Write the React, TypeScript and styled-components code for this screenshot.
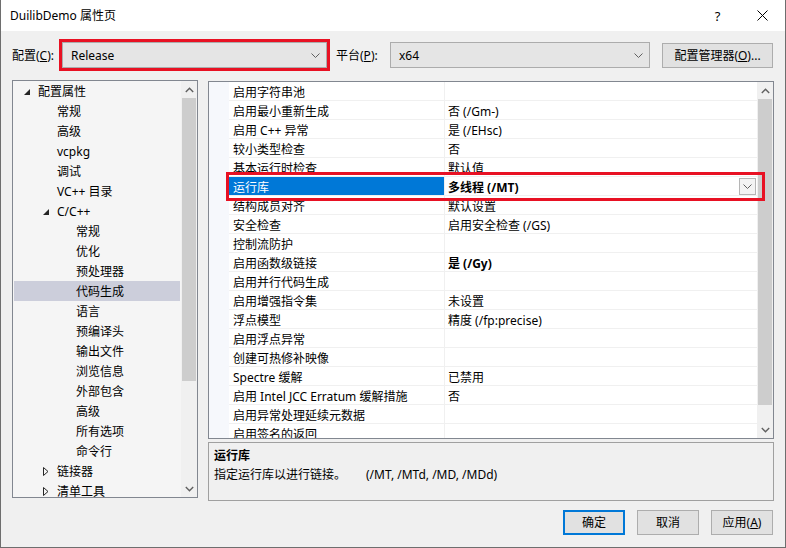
import styled, { createGlobalStyle } from "styled-components";

const GlobalStyle = createGlobalStyle`
  html, body {
    margin: 0;
    padding: 0;
    background: #ffffff;
  }
  body {
    font-family: "Noto Sans", "Noto Sans CJK SC", sans-serif;
    font-size: 12px;
    color: #000;
  }
  * {
    box-sizing: border-box;
  }
`;

const Window = styled.div`
  width: 786px;
  height: 548px;
  display: flex;
  flex-direction: column;
  border: 1px solid #6e6e6e;
  border-top: none;
  background: #f0f0f0;
  overflow: hidden;
`;

const TitleBar = styled.div`
  height: 31px;
  flex: none;
  display: flex;
  align-items: center;
  background: #ffffff;
  padding-left: 9px;
  line-height: 16px;
`;

const Title = styled.div`
  flex: 1;
`;

const TitleButton = styled.div`
  width: 45px;
  height: 31px;
  display: flex;
  align-items: center;
  justify-content: center;
  font-size: 13px;
`;

const Body = styled.div`
  flex: 1;
  display: flex;
  flex-direction: column;
  padding: 11px 11px 0 11px;
`;

const ConfigRow = styled.div`
  display: flex;
  align-items: center;
  height: 26px;
`;

const FieldLabel = styled.label<{ $w: number; $ml?: number }>`
  width: ${(p) => p.$w}px;
  margin-left: ${(p) => p.$ml ?? 0}px;
  flex: none;
  padding-top: 2px;
  line-height: 16px;
`;

const Combo = styled.div<{ $w: number; $marked?: boolean }>`
  width: ${(p) => p.$w}px;
  height: 26px;
  flex: none;
  display: flex;
  align-items: center;
  justify-content: space-between;
  padding: 1px 6px 0 8px;
  background: #e5e5e5;
  border: 1px solid #acacac;
  line-height: 16px;
  outline: ${(p) => (p.$marked ? "3px solid #e81123" : "none")};
`;

const PushButton = styled.button<{ $w: number; $ml?: number; $default?: boolean }>`
  width: ${(p) => p.$w}px;
  margin-left: ${(p) => p.$ml ?? 0}px;
  height: 25px;
  flex: none;
  padding: 1px 0 0;
  font: inherit;
  line-height: 16px;
  color: #000;
  background: #e1e1e1;
  border: ${(p) => (p.$default ? "2px solid #0078d7" : "1px solid #adadad")};
`;

const Main = styled.div`
  display: flex;
  gap: 10px;
  margin-top: 12px;
  height: 421px;
`;

const TreePanel = styled.div`
  width: 186px;
  height: 418px;
  flex: none;
  display: flex;
  border: 1px solid #828790;
  background: #f5f5f5;
  overflow: hidden;
`;

const TreeList = styled.div`
  flex: 1;
  padding: 0 1px;
  overflow: hidden;
`;

const TreeRow = styled.div<{ $level: number; $selected?: boolean }>`
  height: 20px;
  display: flex;
  align-items: center;
  padding-top: 2px;
  padding-left: ${(p) => 7 + p.$level * 19}px;
  background: ${(p) => (p.$selected ? "#cccedb" : "transparent")};
  line-height: 16px;
  white-space: nowrap;
`;

const Twisty = styled.span`
  width: 17px;
  flex: none;
  display: flex;
  align-items: center;
  padding-left: 3px;
  margin-top: -1px;
`;

const ScrollBar = styled.div`
  width: 16px;
  flex: none;
  display: flex;
  flex-direction: column;
  background: #f0f0f0;
`;

const ScrollArrow = styled.div`
  height: 17px;
  flex: none;
  display: flex;
  align-items: center;
  justify-content: center;
`;

const ScrollThumb = styled.div<{ $h: number }>`
  height: ${(p) => p.$h}px;
  flex: none;
  margin: 0 1px;
  background: #cdcdcd;
`;

const ScrollTrack = styled.div`
  flex: 1;
`;

const RightColumn = styled.div`
  width: 566px;
  flex: none;
  display: flex;
  flex-direction: column;
`;

const GridPanel = styled.div`
  margin-top: 1px;
  height: 358px;
  flex: none;
  display: flex;
  border: 1px solid #828790;
  background: #ffffff;
  overflow: hidden;
`;

const GridList = styled.div`
  flex: 1;
  display: flex;
  flex-direction: column;
`;

const GridRow = styled.div<{ $marked?: boolean }>`
  height: 19px;
  flex: none;
  display: flex;
  position: relative;
  z-index: ${(p) => (p.$marked ? 2 : "auto")};

  &::after {
    content: "";
    display: ${(p) => (p.$marked ? "block" : "none")};
    position: absolute;
    left: 17px;
    right: -8px;
    top: -5px;
    bottom: -5px;
    border: 3px solid #e81123;
  }
`;

const Gutter = styled.div`
  width: 20px;
  flex: none;
  background: #f6f8fc;
`;

const NameCell = styled.div<{ $selected?: boolean }>`
  width: 216px;
  flex: none;
  display: flex;
  align-items: center;
  padding-left: 4px;
  padding-top: 3px;
  border-bottom: 1px solid #f0f0f0;
  border-right: 1px solid #f0f0f0;
  background: ${(p) => (p.$selected ? "#0078d7" : "transparent")};
  color: ${(p) => (p.$selected ? "#ffffff" : "#000000")};
  line-height: 15px;
  white-space: nowrap;
`;

const ValueCell = styled.div<{ $bold?: boolean }>`
  flex: 1;
  display: flex;
  align-items: center;
  justify-content: space-between;
  padding-left: 3px;
  padding-right: 1px;
  padding-top: 3px;
  border-bottom: 1px solid #f0f0f0;
  font-weight: ${(p) => (p.$bold ? 700 : 400)};
  line-height: 15px;
  white-space: nowrap;
`;

const DropButton = styled.span`
  width: 17px;
  height: 17px;
  margin-top: -3px;
  display: flex;
  align-items: center;
  justify-content: center;
  background: #f3f3f3;
  border: 1px solid #b5b5b5;
`;

const DescPanel = styled.div`
  margin-top: 3px;
  height: 59px;
  flex: none;
  border: 1px solid #a0a0a0;
  padding: 3px 5px;
  line-height: 19px;
`;

const DescTitle = styled.div`
  font-weight: 700;
`;

const DescSwitches = styled.span`
  margin-left: 20px;
`;

const ButtonRow = styled.div`
  display: flex;
  justify-content: flex-end;
  gap: 12px;
  margin-top: 9px;
  padding-right: 1px;
`;

const Chevron = ({ up, color = "#606060" }: { up?: boolean; color?: string }) => (
  <svg width="9" height="6" viewBox="0 0 9 6">
    <path
      d={up ? "M0.8 5 L4.5 1.3 L8.2 5" : "M0.8 1 L4.5 4.7 L8.2 1"}
      fill="none"
      stroke={color}
      strokeWidth="1.4"
    />
  </svg>
);

const ComboChevron = () => (
  <svg width="9" height="5" viewBox="0 0 9 5">
    <path d="M0.5 0.5 L4.5 4.5 L8.5 0.5" fill="none" stroke="#606060" strokeWidth="1" />
  </svg>
);

const Expanded = () => (
  <svg width="6" height="6" viewBox="0 0 6 6">
    <polygon points="6,0 6,6 0,6" fill="#262626" />
  </svg>
);

const Collapsed = () => (
  <svg width="6" height="9" viewBox="0 0 6 9">
    <polygon points="0.5,0.5 5,4.5 0.5,8.5" fill="none" stroke="#262626" strokeWidth="1" />
  </svg>
);

interface ITreeItem {
  level: number;
  text: string;
  twisty?: "open" | "closed";
  selected?: boolean;
}

const treeItems: ITreeItem[] = [
  { level: 0, text: "配置属性", twisty: "open" },
  { level: 1, text: "常规" },
  { level: 1, text: "高级" },
  { level: 1, text: "vcpkg" },
  { level: 1, text: "调试" },
  { level: 1, text: "VC++ 目录" },
  { level: 1, text: "C/C++", twisty: "open" },
  { level: 2, text: "常规" },
  { level: 2, text: "优化" },
  { level: 2, text: "预处理器" },
  { level: 2, text: "代码生成", selected: true },
  { level: 2, text: "语言" },
  { level: 2, text: "预编译头" },
  { level: 2, text: "输出文件" },
  { level: 2, text: "浏览信息" },
  { level: 2, text: "外部包含" },
  { level: 2, text: "高级" },
  { level: 2, text: "所有选项" },
  { level: 2, text: "命令行" },
  { level: 1, text: "链接器", twisty: "closed" },
  { level: 1, text: "清单工具", twisty: "closed" },
];

interface IProp {
  name: string;
  value: string;
  bold?: boolean;
  selected?: boolean;
}

const props: IProp[] = [
  { name: "启用字符串池", value: "" },
  { name: "启用最小重新生成", value: "否 (/Gm-)" },
  { name: "启用 C++ 异常", value: "是 (/EHsc)" },
  { name: "较小类型检查", value: "否" },
  { name: "基本运行时检查", value: "默认值" },
  { name: "运行库", value: "多线程 (/MT)", bold: true, selected: true },
  { name: "结构成员对齐", value: "默认设置" },
  { name: "安全检查", value: "启用安全检查 (/GS)" },
  { name: "控制流防护", value: "" },
  { name: "启用函数级链接", value: "是 (/Gy)", bold: true },
  { name: "启用并行代码生成", value: "" },
  { name: "启用增强指令集", value: "未设置" },
  { name: "浮点模型", value: "精度 (/fp:precise)" },
  { name: "启用浮点异常", value: "" },
  { name: "创建可热修补映像", value: "" },
  { name: "Spectre 缓解", value: "已禁用" },
  { name: "启用 Intel JCC Erratum 缓解措施", value: "否" },
  { name: "启用异常处理延续元数据", value: "" },
  { name: "启用签名的返回", value: "" },
];

function App() {
  return (
    <>
      <GlobalStyle />
      <Window>
        <TitleBar>
          <Title>DuilibDemo 属性页</Title>
          <TitleButton>?</TitleButton>
          <TitleButton>
            <svg width="11" height="11" viewBox="0 0 11 11">
              <path d="M0.5 0.5 L10.5 10.5 M10.5 0.5 L0.5 10.5" stroke="#000" strokeWidth="1" />
            </svg>
          </TitleButton>
        </TitleBar>

        <Body>
          <ConfigRow>
            <FieldLabel $w={50}>
              配置(<u>C</u>):
            </FieldLabel>
            <Combo $w={265} $marked>
              Release
              <ComboChevron />
            </Combo>
            <FieldLabel $w={54} $ml={9}>
              平台(<u>P</u>):
            </FieldLabel>
            <Combo $w={260}>
              x64
              <ComboChevron />
            </Combo>
            <PushButton $w={111} $ml={12}>
              配置管理器(<u>O</u>)...
            </PushButton>
          </ConfigRow>

          <Main>
            <TreePanel>
              <TreeList>
                {treeItems.map((item, i) => (
                  <TreeRow key={i} $level={item.level} $selected={item.selected}>
                    <Twisty>
                      {item.twisty === "open" && <Expanded />}
                      {item.twisty === "closed" && <Collapsed />}
                    </Twisty>
                    {item.text}
                  </TreeRow>
                ))}
              </TreeList>
              <ScrollBar>
                <ScrollArrow>
                  <Chevron up />
                </ScrollArrow>
                <ScrollThumb $h={283} />
                <ScrollTrack />
                <ScrollArrow>
                  <Chevron />
                </ScrollArrow>
              </ScrollBar>
            </TreePanel>

            <RightColumn>
              <GridPanel>
                <GridList>
                  {props.map((p, i) => (
                    <GridRow key={i} $marked={p.selected}>
                      <Gutter />
                      <NameCell $selected={p.selected}>{p.name}</NameCell>
                      <ValueCell $bold={p.bold}>
                        {p.value}
                        {p.selected && (
                          <DropButton>
                            <ComboChevron />
                          </DropButton>
                        )}
                      </ValueCell>
                    </GridRow>
                  ))}
                </GridList>
                <ScrollBar>
                  <ScrollArrow>
                    <Chevron up />
                  </ScrollArrow>
                  <ScrollThumb $h={306} />
                  <ScrollTrack />
                  <ScrollArrow>
                    <Chevron />
                  </ScrollArrow>
                </ScrollBar>
              </GridPanel>

              <DescPanel>
                <DescTitle>运行库</DescTitle>
                <div>
                  指定运行库以进行链接。
                  <DescSwitches>(/MT, /MTd, /MD, /MDd)</DescSwitches>
                </div>
              </DescPanel>
            </RightColumn>
          </Main>

          <ButtonRow>
            <PushButton $w={62} $default>
              确定
            </PushButton>
            <PushButton $w={62}>取消</PushButton>
            <PushButton $w={62}>
              应用(<u>A</u>)
            </PushButton>
          </ButtonRow>
        </Body>
      </Window>
    </>
  );
}

export default App;
